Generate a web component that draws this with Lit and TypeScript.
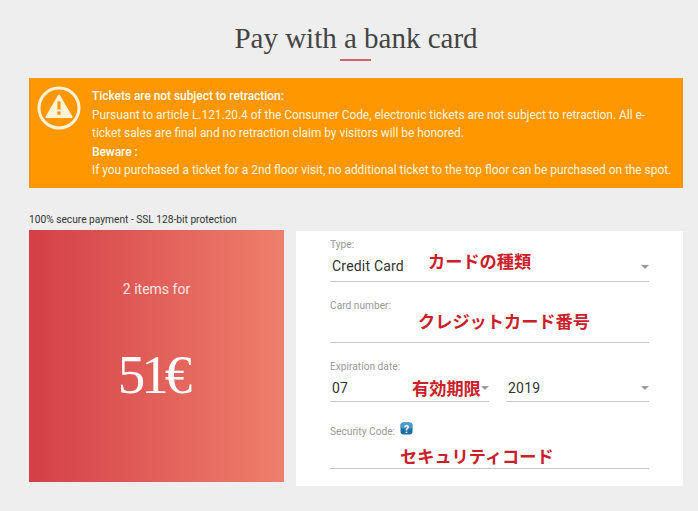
import { LitElement, html, css } from "lit";
import { customElement } from "lit/decorators.js";

const arrow = html`<span class="arrow"></span>`;

@customElement("app-root")
export class AppRoot extends LitElement {
  static styles = css`
    :host { display: block; width: 698px; height: 511px; box-sizing: border-box; background: #eeeeee; padding: 0 15px 0 29px; font-family: Roboto, "Liberation Sans", sans-serif; overflow: hidden; }
    h1 { margin: 0; padding-top: 22px; height: 37px; box-sizing: content-box; text-align: center; font: 400 29px/32px "Liberation Serif", serif; color: #444; }
    .rule { width: 31px; height: 2px; background: #d9636b; margin: 0 0 17px 311px; }
    .alert { height: 110px; box-sizing: border-box; background: #ff9800; color: #fff3dd; display: flex; padding: 8px 0 0 8px; gap: 11px; font-size: 11.88px; line-height: 18.5px; }
    .alert svg { flex: none; }
    .text { padding-top: 1px; }
    .alert b { font-weight: 500; color: #fff; display: block; }
    .alert p { margin: 0; white-space: nowrap; }
    .secure { margin: 26px 0 0; font-size: 10.2px; line-height: 12px; color: #333; height: 16px; }
    .row { display: flex; gap: 12px; align-items: flex-start; }
    .total { width: 255px; height: 252px; background: linear-gradient(90deg, #d44047, #ee7f6c); color: #fff; text-align: center; box-sizing: border-box; padding-top: 50px; }
    .items { font-size: 14px; line-height: 18px; color: #fde6e2; }
    .price { margin-top: 47px; padding-right: 7px; font: 400 55px/60px "Liberation Serif", serif; letter-spacing: -4px; }
    .form { position: relative; width: 387px; height: 255px; margin-top: 1px; background: #fff; box-sizing: border-box; padding: 8px 34px 0; }
    .label { font-size: 10.2px; line-height: 12px; color: #999; }
    .field { position: relative; border-bottom: 1px solid #c4c4c4; box-sizing: border-box; }
    .value { font-size: 14px; line-height: 20px; color: #333; padding-left: 2px; letter-spacing: 0.2px; }
    .arrow { position: absolute; right: 0; top: 50%; border: 4px solid transparent; border-top: 4px solid #9a9a9a; border-bottom: 0; margin-top: -3px; }
    .type { margin-top: 4px; height: 27px; padding-top: 1px; }
    .sp { margin-top: 18px; }
    .num { height: 31px; margin-top: 0; }
    .two { display: flex; gap: 17px; margin-top: 4px; }
    .two .field { height: 25px; padding-top: 1px; }
    .m { width: 159px; }
    .y { width: 143px; }
    .code { height: 31px; }
    .sec { display: flex; align-items: flex-start; gap: 5px; margin-top: 24px; }
    .sec svg { margin-top: -4px; }
    .note { position: absolute; font: 700 17.2px/24px "Noto Sans CJK JP", sans-serif; color: #c9202a; white-space: nowrap; }
  `;

  render() {
    return html`
      <h1>Pay with a bank card</h1>
      <div class="rule"></div>
      <div class="alert">
        <svg width="44" height="44" viewBox="0 0 44 44">
          <circle cx="22" cy="22" r="20" fill="none" stroke="#fff3d6" stroke-width="3"></circle>
          <path d="M22 9.5 L34.5 31 H9.5 Z" fill="#fff3d6" stroke="#fff3d6" stroke-width="2" stroke-linejoin="round"></path>
          <rect x="20.4" y="15.5" width="3.2" height="8" fill="#ff9800"></rect>
          <rect x="20.4" y="25.5" width="3.2" height="3.2" fill="#ff9800"></rect>
        </svg>
        <div class="text">
          <b>Tickets are not subject to retraction:</b>
          <p>Pursuant to article L.121.20.4 of the Consumer Code, electronic tickets are not subject to retraction. All e-</p>
          <p>ticket sales are final and no retraction claim by visitors will be honored.</p>
          <b>Beware :</b>
          <p>If you purchased a ticket for a 2nd floor visit, no additional ticket to the top floor can be purchased on the spot.</p>
        </div>
      </div>
      <div class="secure">100% secure payment - SSL 128-bit protection</div>
      <div class="row">
        <div class="total">
          <div class="items">2 items for</div>
          <div class="price">51€</div>
        </div>
        <div class="form">
          <div class="label">Type:</div>
          <div class="field type"><div class="value">Credit Card</div>${arrow}</div>
          <div class="label sp">Card number:</div>
          <div class="field num"></div>
          <div class="label sp">Expiration date:</div>
          <div class="two">
            <div class="field m"><div class="value">07</div>${arrow}</div>
            <div class="field y"><div class="value">2019</div>${arrow}</div>
          </div>
          <div class="label sec">Security Code:
            <svg width="13" height="13" viewBox="0 0 13 13">
              <rect x="0.5" y="0.5" width="12" height="12" rx="3" fill="#1f6ea3"></rect>
              <rect x="0.5" y="0.5" width="12" height="6" rx="3" fill="#4d9ac8"></rect>
              <text x="6.5" y="10.5" text-anchor="middle" font-family="Roboto" font-weight="700" font-size="10" fill="#fff">?</text>
            </svg>
          </div>
          <div class="field code"></div>
          <span class="note" style="left:132px;top:18px">カードの種類</span>
          <span class="note" style="left:122px;top:78px">クレジットカード番号</span>
          <span class="note" style="left:116px;top:145px">有効期限</span>
          <span class="note" style="left:104px;top:213px">セキュリティコード</span>
        </div>
      </div>
    `;
  }
}
